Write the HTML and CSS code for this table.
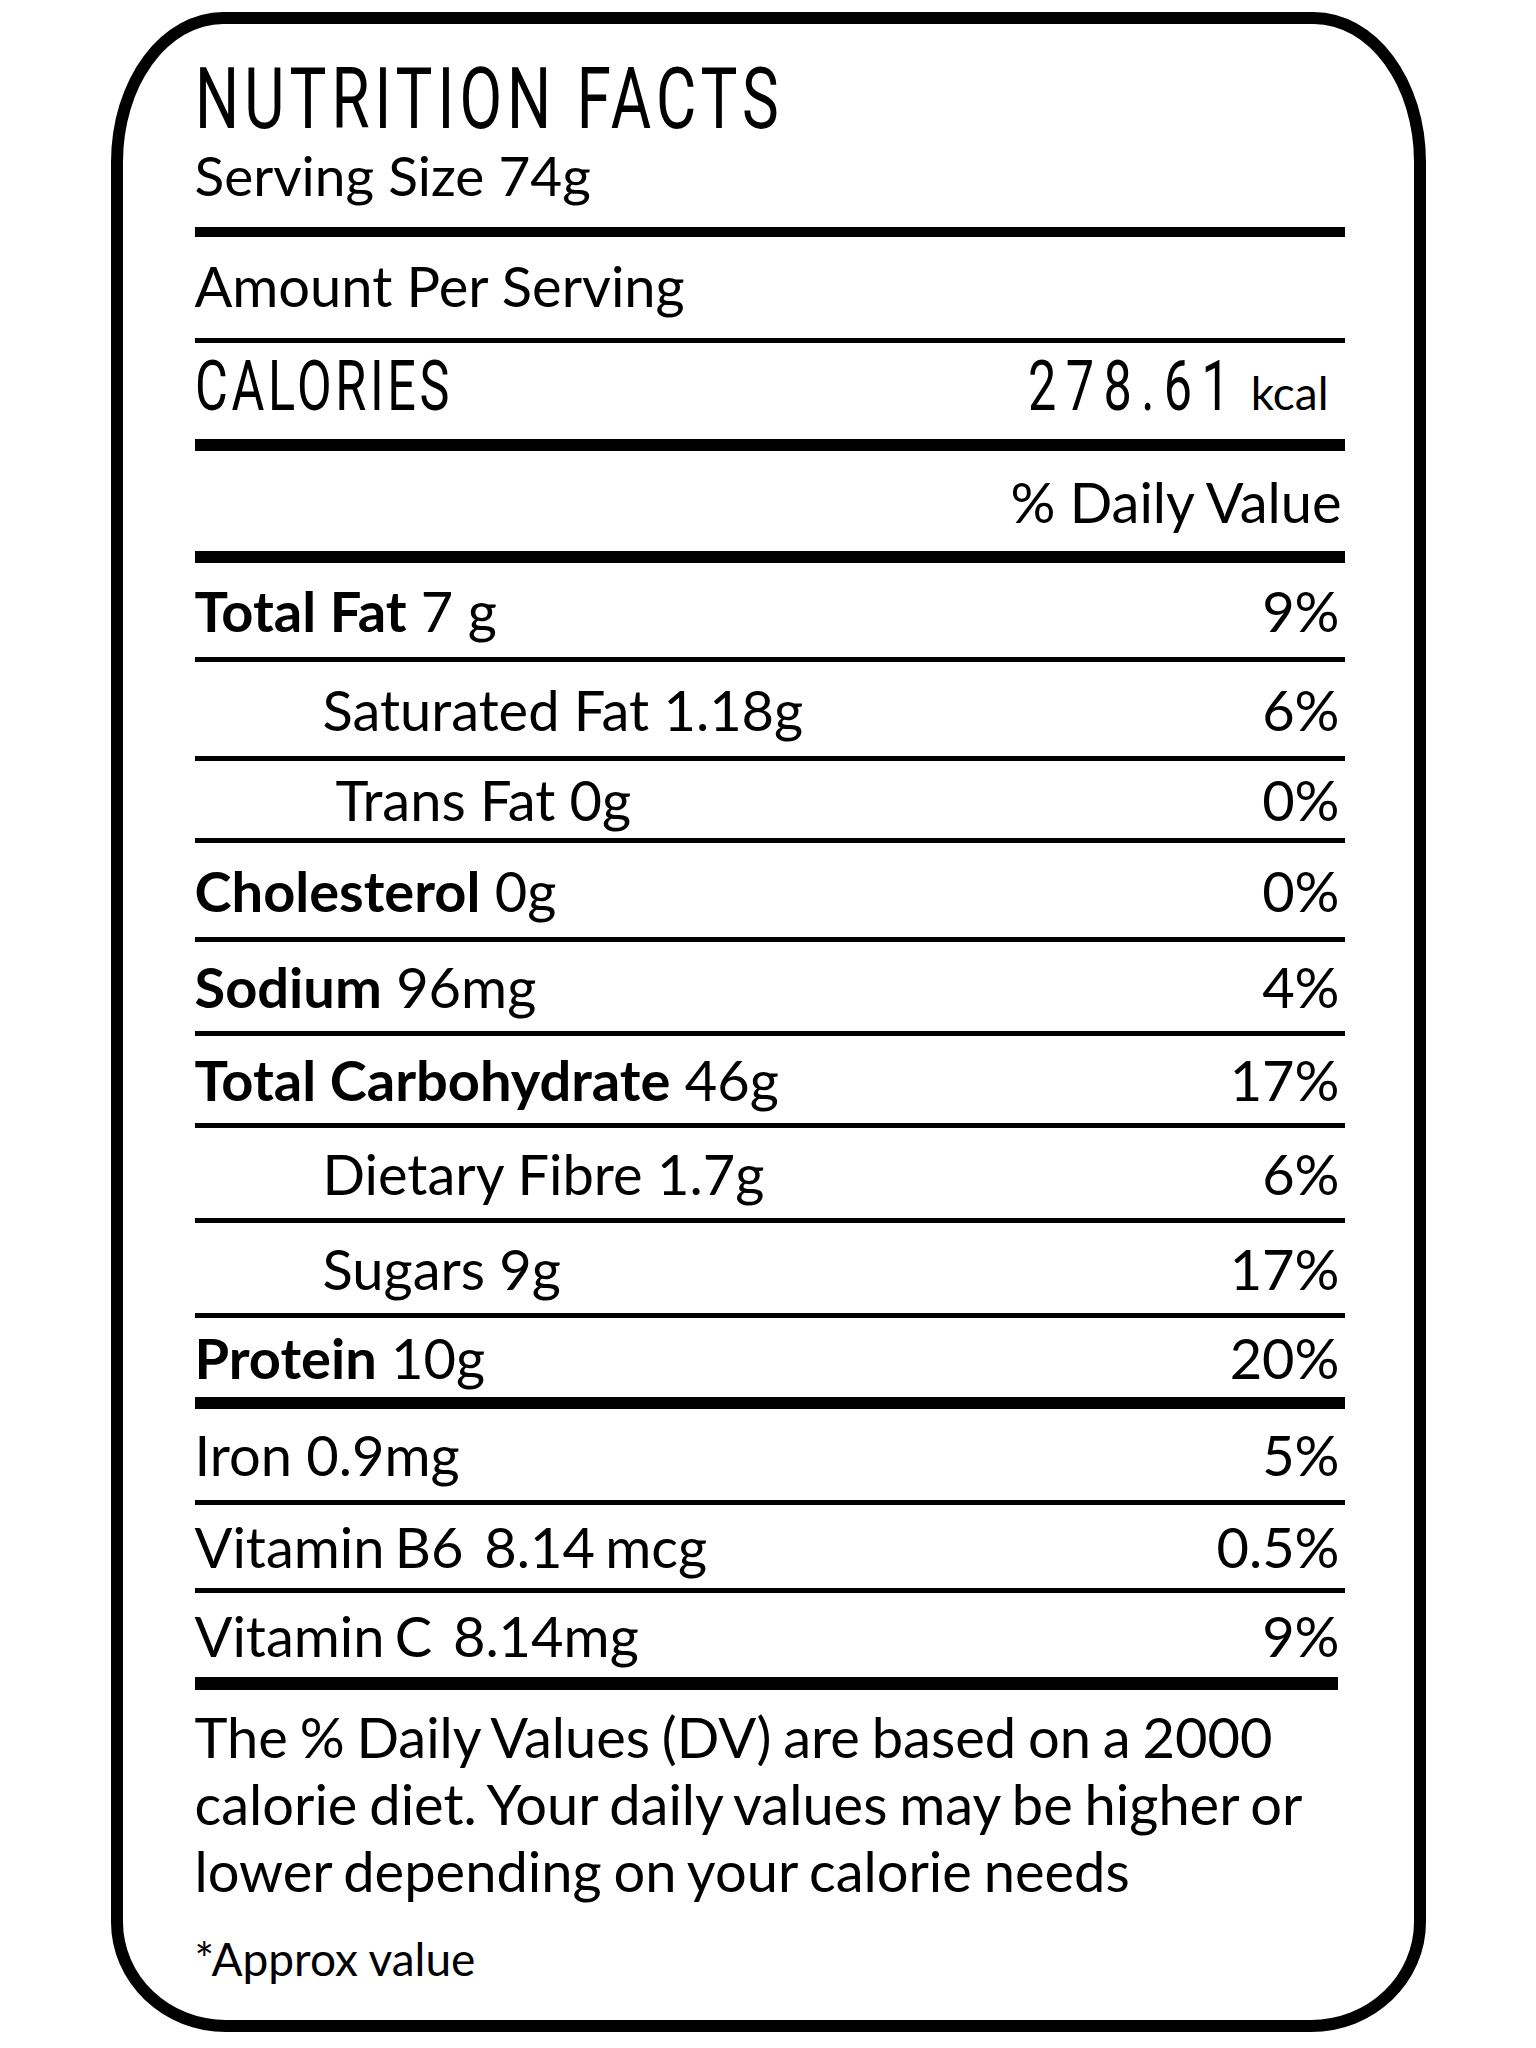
FILE: index.html
```html
<!DOCTYPE html>
<html lang="en">
<head>
<meta charset="utf-8">
<title>Nutrition Facts</title>
<link rel="stylesheet" href="styles.css">
</head>
<body>
<div class="label">
  <div class="head">
    <div class="title">NUTRITION FACTS</div>
    <div class="serving">Serving Size 74g</div>
  </div>
  <div class="row amount">Amount Per Serving</div>
  <div class="row calories">
    <span class="cond cal-label">CALORIES</span>
    <span class="cal-value"><span class="cond cal-num">278.61</span><span class="kcal">kcal</span></span>
  </div>
  <div class="row dv">% Daily Value</div>
  <div class="row nutr h94"><span><b>Total Fat</b> 7 g</span><span>9%</span></div>
  <div class="row nutr h94"><span class="sub">Saturated Fat 1.18g</span><span>6%</span></div>
  <div class="row nutr h77"><span class="sub2">Trans Fat 0g</span><span>0%</span></div>
  <div class="row nutr h94"><span><b>Cholesterol</b> 0g</span><span>0%</span></div>
  <div class="row nutr h89"><span><b>Sodium</b> 96mg</span><span>4%</span></div>
  <div class="row nutr h87"><span><b>Total Carbohydrate</b> 46g</span><span>17%</span></div>
  <div class="row nutr h90"><span class="sub">Dietary Fibre 1.7g</span><span>6%</span></div>
  <div class="row nutr h90"><span class="sub">Sugars 9g</span><span>17%</span></div>
  <div class="row nutr h79 thick"><span><b>Protein</b> 10g</span><span>20%</span></div>
  <div class="row nutr h91"><span>Iron 0.9mg</span><span>5%</span></div>
  <div class="row nutr h83"><span class="vit">Vitamin B6&nbsp; 8.14 mcg</span><span>0.5%</span></div>
  <div class="row nutr h84 last"><span class="vit">Vitamin C&nbsp; 8.14mg</span><span>9%</span></div>
  <div class="end-rule"></div>
  <p class="note">The % Daily Values (DV) are based on a 2000<br>calorie diet. Your daily values may be higher or<br>lower depending on your calorie needs</p>
  <p class="approx">*Approx value</p>
</div>
</body>
</html>
```
FILE: styles.css
```css
html, body {
  margin: 0;
  padding: 0;
  background: #fff;
}

.label {
  box-sizing: border-box;
  width: 1315px;
  height: 2020px;
  margin: 12px auto 0;
  border: 12px solid #000;
  border-radius: 112px 112px 115px 115px / 150px 150px 110px 110px;
  padding: 0 69px 0 72px;
  font-family: "Lato", "Liberation Sans", sans-serif;
  color: #000;
}

.head {
  height: 172px;
  padding-top: 31px;
  border-bottom: 10px solid #000;
}

.title {
  font-family: "Roboto", "DejaVu Sans", sans-serif;
  font-weight: 400;
  font-size: 86px;
  line-height: 88px;
  letter-spacing: 7px;
  white-space: nowrap;
  transform: scaleX(0.72);
  transform-origin: left center;
}

.serving {
  margin-top: 3px;
  font-size: 55px;
  line-height: 58px;
}

.row {
  display: flex;
  align-items: center;
  justify-content: space-between;
  border-bottom: 5px solid #000;
  font-size: 56px;
  line-height: 67px;
  white-space: nowrap;
}

.amount {
  height: 97px;
  padding-bottom: 4px;
}

.calories {
  box-sizing: border-box;
  height: 108px;
  padding-top: 3px;
  align-items: baseline;
  border-bottom-width: 12px;
}

.cond {
  display: inline-block;
  font-family: "Roboto", "DejaVu Sans", sans-serif;
  font-weight: 400;
  font-size: 70px;
  line-height: 80px;
  transform: scaleX(0.72);
}

.cal-label {
  letter-spacing: 5px;
  transform-origin: left center;
}

.cal-value {
  display: flex;
  align-items: baseline;
  padding-right: 16px;
}

.cal-num {
  letter-spacing: 13px;
  transform-origin: right center;
}

.kcal {
  margin-left: 12px;
  font-size: 46px;
}

.dv {
  height: 100px;
  justify-content: flex-end;
  padding-right: 3px;
  border-bottom-width: 12px;
}

.nutr {
  padding-right: 5px;
}

.nutr b {
  font-weight: 700;
}

.sub {
  padding-left: 128px;
}

.sub2 {
  padding-left: 141px;
}

.vit {
  word-spacing: -4px;
}

.thick {
  border-bottom-width: 12px;
}

.last {
  border-bottom: none;
}

.h77 { height: 77px; }
.h79 { height: 79px; }
.h83 { height: 83px; }
.h84 { height: 84px; }
.h87 { height: 87px; }
.h89 { height: 89px; }
.h90 { height: 90px; }
.h91 { height: 91px; }
.h94 { height: 94px; }

.end-rule {
  height: 13px;
  margin-right: 7px;
  background: #000;
}

.note {
  margin: 13px 0 0;
  font-size: 56px;
  line-height: 67px;
  word-spacing: -2.5px;
  white-space: nowrap;
}

.approx {
  margin: 27px 0 0;
  font-size: 46px;
  line-height: 55px;
}
```
